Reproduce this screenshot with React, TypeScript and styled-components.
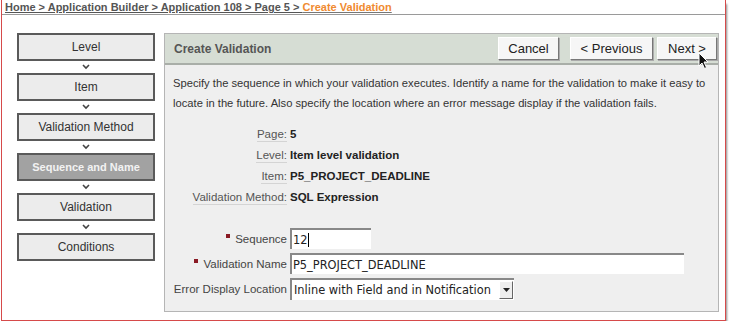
import styled, { createGlobalStyle } from 'styled-components';

const GlobalStyle = createGlobalStyle`
   body {
      margin: 0;
      background: #fff;
      font-family: 'Liberation Sans', Arial, sans-serif;
   }
`;

const steps = ['Level', 'Item', 'Validation Method', 'Sequence and Name', 'Validation', 'Conditions'];
const activeStep = 3;

const details = [
   { label: 'Page', value: '5' },
   { label: 'Level', value: 'Item level validation' },
   { label: 'Item', value: 'P5_PROJECT_DEADLINE' },
   { label: 'Validation Method', value: 'SQL Expression' },
];

const Chevron = () => (
   <svg width='8' height='6' viewBox='0 0 8 6'>
      <path d='M1 1 L4 4 L7 1' fill='none' stroke='#444' strokeWidth='1.6' />
   </svg>
);

const Cursor = () => (
   <svg width='12' height='18' viewBox='0 0 12 18'>
      <path d='M1 1 L1 14 L4 11 L6.5 16.5 L8.5 15.5 L6 10 L10 10 Z' fill='#111' stroke='#fff' strokeWidth='1' />
   </svg>
);

const App = () => {
   return (
      <>
         <GlobalStyle />
         <Frame>
            <Breadcrumb>
               <span>Home &gt; Application Builder &gt; Application 108 &gt; Page 5 &gt; </span>
               <Current>Create Validation</Current>
            </Breadcrumb>
            <Body>
               {/* 단계 */}
               <Steps>
                  {steps.map((step, index) => (
                     <StepGroup key={step}>
                        {index > 0 && (
                           <Arrow>
                              <Chevron />
                           </Arrow>
                        )}
                        <Step $active={index === activeStep}>{step}</Step>
                     </StepGroup>
                  ))}
               </Steps>
               {/* 패널 */}
               <Panel>
                  <PanelHeader>
                     <PanelTitle>Create Validation</PanelTitle>
                     <Buttons>
                        <Button $width={61}>Cancel</Button>
                        <Button $width={83} $gap={11}>
                           &lt; Previous
                        </Button>
                        <Button $width={60} $gap={4}>
                           Next &gt;
                           <CursorWrap>
                              <Cursor />
                           </CursorWrap>
                        </Button>
                     </Buttons>
                  </PanelHeader>
                  <PanelBody>
                     <Intro>
                        <span>Specify the sequence in which your validation executes. Identify a name for the validation to make it easy to</span>
                        <span>locate in the future. Also specify the location where an error message display if the validation fails.</span>
                     </Intro>
                     <Details>
                        {details.map((d) => (
                           <Row key={d.label}>
                              <Label>
                                 <span>{d.label}:</span>
                              </Label>
                              <Value>{d.value}</Value>
                           </Row>
                        ))}
                     </Details>
                     <Form>
                        <FormRow>
                           <FieldLabel $required>Sequence</FieldLabel>
                           <Input $width={81}>
                              12<Caret />
                           </Input>
                        </FormRow>
                        <FormRow>
                           <FieldLabel $required>Validation Name</FieldLabel>
                           <Input $width={394}>P5_PROJECT_DEADLINE</Input>
                        </FormRow>
                        <FormRow>
                           <FieldLabel>Error Display Location</FieldLabel>
                           <Select>
                              <span>Inline with Field and in Notification</span>
                              <SelectArrow>
                                 <svg width='7' height='5' viewBox='0 0 7 5'>
                                    <path d='M0 0 L7 0 L3.5 4 Z' fill='#222' />
                                 </svg>
                              </SelectArrow>
                           </Select>
                        </FormRow>
                     </Form>
                  </PanelBody>
               </Panel>
            </Body>
         </Frame>
      </>
   );
};

const Frame = styled.div`
   margin-left: 1px;
   width: 723px;
   height: 320px;
   border: 1px solid #d64a4a;
   border-top: none;
   box-shadow: 2px 3px 2px -1px #8a8a8a;
   display: flex;
   flex-direction: column;
`;

const Breadcrumb = styled.div`
   height: 14px;
   padding-left: 3px;
   border-bottom: 1px solid #9a9a9a;
   font-size: 11px;
   font-weight: bold;
   color: #555;
   line-height: 15px;
   white-space: nowrap;
   span:first-child {
      text-decoration: underline;
   }
`;

const Current = styled.span`
   color: #f08a30;
   text-decoration: underline;
   text-decoration-color: #777;
`;

const Body = styled.div`
   display: flex;
   gap: 9px;
   padding: 18px 0 0 15px;
`;

const Steps = styled.div`
   width: 138px;
   display: flex;
   flex-direction: column;
`;

const StepGroup = styled.div`
   display: flex;
   flex-direction: column;
`;

const Arrow = styled.div`
   height: 12px;
   display: flex;
   align-items: center;
   justify-content: center;
`;

const Step = styled.div<{ $active?: boolean }>`
   height: 24px;
   border: 2px solid #5a5a5a;
   background: ${(p) => (p.$active ? '#a2a2a2' : '#ececec')};
   color: ${(p) => (p.$active ? '#f2f2f2' : '#333')};
   font-size: ${(p) => (p.$active ? '11px' : '12px')};
   font-weight: ${(p) => (p.$active ? 'bold' : 'normal')};
   display: flex;
   align-items: center;
   justify-content: center;
`;

const Panel = styled.div`
   width: 553px;
   height: 277px;
   border: 1px solid #b5b5b5;
   background: #efefef;
   display: flex;
   flex-direction: column;
`;

const PanelHeader = styled.div`
   height: 29px;
   background: #d6ddd4;
   border-bottom: 2px solid #a9aea8;
   display: flex;
   align-items: center;
   justify-content: space-between;
   padding: 0 1px 0 9px;
`;

const PanelTitle = styled.div`
   font-size: 12px;
   font-weight: bold;
   color: #555;
`;

const Buttons = styled.div`
   display: flex;
   align-items: center;
`;

const Button = styled.div<{ $width: number; $gap?: number }>`
   position: relative;
   box-sizing: border-box;
   width: ${(p) => p.$width}px;
   height: 23px;
   margin-left: ${(p) => p.$gap ?? 0}px;
   background: #f6f6f6;
   border: 1px solid #fff;
   border-right-color: #777;
   border-bottom-color: #777;
   box-shadow: 1px 1px 0 #aaa;
   font-size: 13px;
   color: #222;
   display: flex;
   align-items: center;
   justify-content: center;
`;

const CursorWrap = styled.span`
   position: absolute;
   right: 6px;
   top: 14px;
   line-height: 0;
`;

const PanelBody = styled.div`
   padding: 8px 0 0 8px;
   display: flex;
   flex-direction: column;
`;

const Intro = styled.p`
   margin: 0;
   font-size: 11.2px;
   line-height: 20px;
   color: #333;
   white-space: nowrap;
   display: flex;
   flex-direction: column;
`;

const Details = styled.div`
   margin-top: 10px;
   display: flex;
   flex-direction: column;
`;

const Row = styled.div`
   display: flex;
   align-items: center;
   height: 21px;
`;

const Label = styled.div`
   width: 114px;
   text-align: right;
   font-size: 11.5px;
   color: #555;
   padding-right: 3px;
   span {
      padding-bottom: 1px;
      border-bottom: 1px solid #d4d4d4;
   }
`;

const Value = styled.div`
   font-size: 11.5px;
   font-weight: bold;
   color: #222;
`;

const Form = styled.div`
   margin-top: 21px;
   display: flex;
   flex-direction: column;
   gap: 4px;
`;

const FormRow = styled.div`
   display: flex;
   align-items: center;
`;

const FieldLabel = styled.div<{ $required?: boolean }>`
   width: 114px;
   padding-right: 3px;
   text-align: right;
   font-size: 11.5px;
   color: #444;
   white-space: nowrap;
   &::before {
      content: '';
      display: ${(p) => (p.$required ? 'inline-block' : 'none')};
      width: 4px;
      height: 4px;
      background: #8a1a24;
      margin-right: 5px;
      vertical-align: 5px;
   }
`;

const Input = styled.div<{ $width: number }>`
   width: ${(p) => p.$width}px;
   height: 21px;
   box-sizing: border-box;
   background: #fff;
   border-top: 2px solid #888;
   border-left: 2px solid #888;
   padding-left: 1px;
   font-family: 'DejaVu Sans', sans-serif;
   font-size: 11.4px;
   color: #222;
   display: flex;
   align-items: center;
`;

const Caret = styled.span`
   display: inline-block;
   width: 1px;
   height: 14px;
   background: #000;
`;

const Select = styled.div`
   width: 224px;
   height: 22px;
   box-sizing: border-box;
   background: #fff;
   border-top: 2px solid #888;
   border-left: 2px solid #888;
   padding-left: 2px;
   font-family: 'DejaVu Sans', sans-serif;
   font-size: 11.4px;
   color: #222;
   white-space: nowrap;
   display: flex;
   align-items: center;
   justify-content: space-between;
`;

const SelectArrow = styled.span`
   width: 12px;
   height: 16px;
   margin-right: 1px;
   border: 1px solid #fff;
   border-right-color: #666;
   border-bottom-color: #666;
   background: #eee;
   display: flex;
   align-items: center;
   justify-content: center;
`;

export default App;
